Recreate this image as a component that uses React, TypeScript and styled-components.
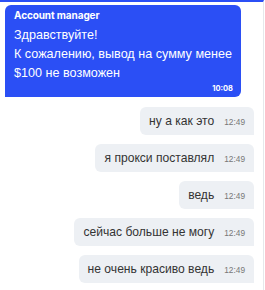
import React from "react";
import styled, { createGlobalStyle } from "styled-components";

const Global = createGlobalStyle`
  html, body { margin: 0; padding: 0; background: #fff; }
  body { font-family: "Liberation Sans", Arial, sans-serif; }
`;

const Chat = styled.div`
  width: 264px;
  height: 290px;
  border-right: 1px solid #e6e8eb;
  border-top: 2px solid #2b4ff5;
  box-sizing: border-box;
  display: flex;
  flex-direction: column;
  gap: 9px;
  padding: 3px 9px 0 5px;
  overflow: hidden;
`;

const Incoming = styled.div`
  align-self: flex-start;
  width: 236px;
  box-sizing: border-box;
  background: #2b4ff5;
  color: #fff;
  border-radius: 6px 6px 6px 0;
  padding: 4px 8px 3px 9px;
  margin-bottom: 1px;
`;

const Sender = styled.div`
  font-family: Inter, "Liberation Sans", sans-serif;
  font-weight: 700;
  font-size: 10px;
  line-height: 13px;
  letter-spacing: -0.1px;
`;

const Body = styled.div`
  font-size: 12.6px;
  line-height: 19px;
  margin-top: 4px;
`;

const StampIn = styled.div`
  font-family: Inter, "Liberation Sans", sans-serif;
  font-weight: 700;
  font-size: 7.5px;
  line-height: 10px;
  text-align: right;
  margin-top: 1px;
`;

const Outgoing = styled.div`
  align-self: flex-end;
  display: flex;
  align-items: center;
  gap: 10px;
  height: 28px;
  box-sizing: border-box;
  padding: 0 9px 0 9px;
  background: #edf0f4;
  border-radius: 6px 6px 0 6px;
  color: #333;
  font-size: 12.1px;
`;

const Time = styled.span`
  font-size: 8.3px;
  color: #777;
  padding-top: 2px;
`;

const msgs = [
  "ну а как это",
  "я прокси поставлял",
  "ведь",
  "сейчас больше не могу",
  "не очень красиво ведь",
];

export default function App() {
  return (
    <>
      <Global />
      <Chat>
        <Incoming>
          <Sender>Account manager</Sender>
          <Body>
            Здравствуйте!
            <br />
            К сожалению, вывод на сумму менее $100 не возможен
          </Body>
          <StampIn>10:08</StampIn>
        </Incoming>
        {msgs.map((m) => (
          <Outgoing key={m}>
            <span>{m}</span>
            <Time>12:49</Time>
          </Outgoing>
        ))}
      </Chat>
    </>
  );
}
